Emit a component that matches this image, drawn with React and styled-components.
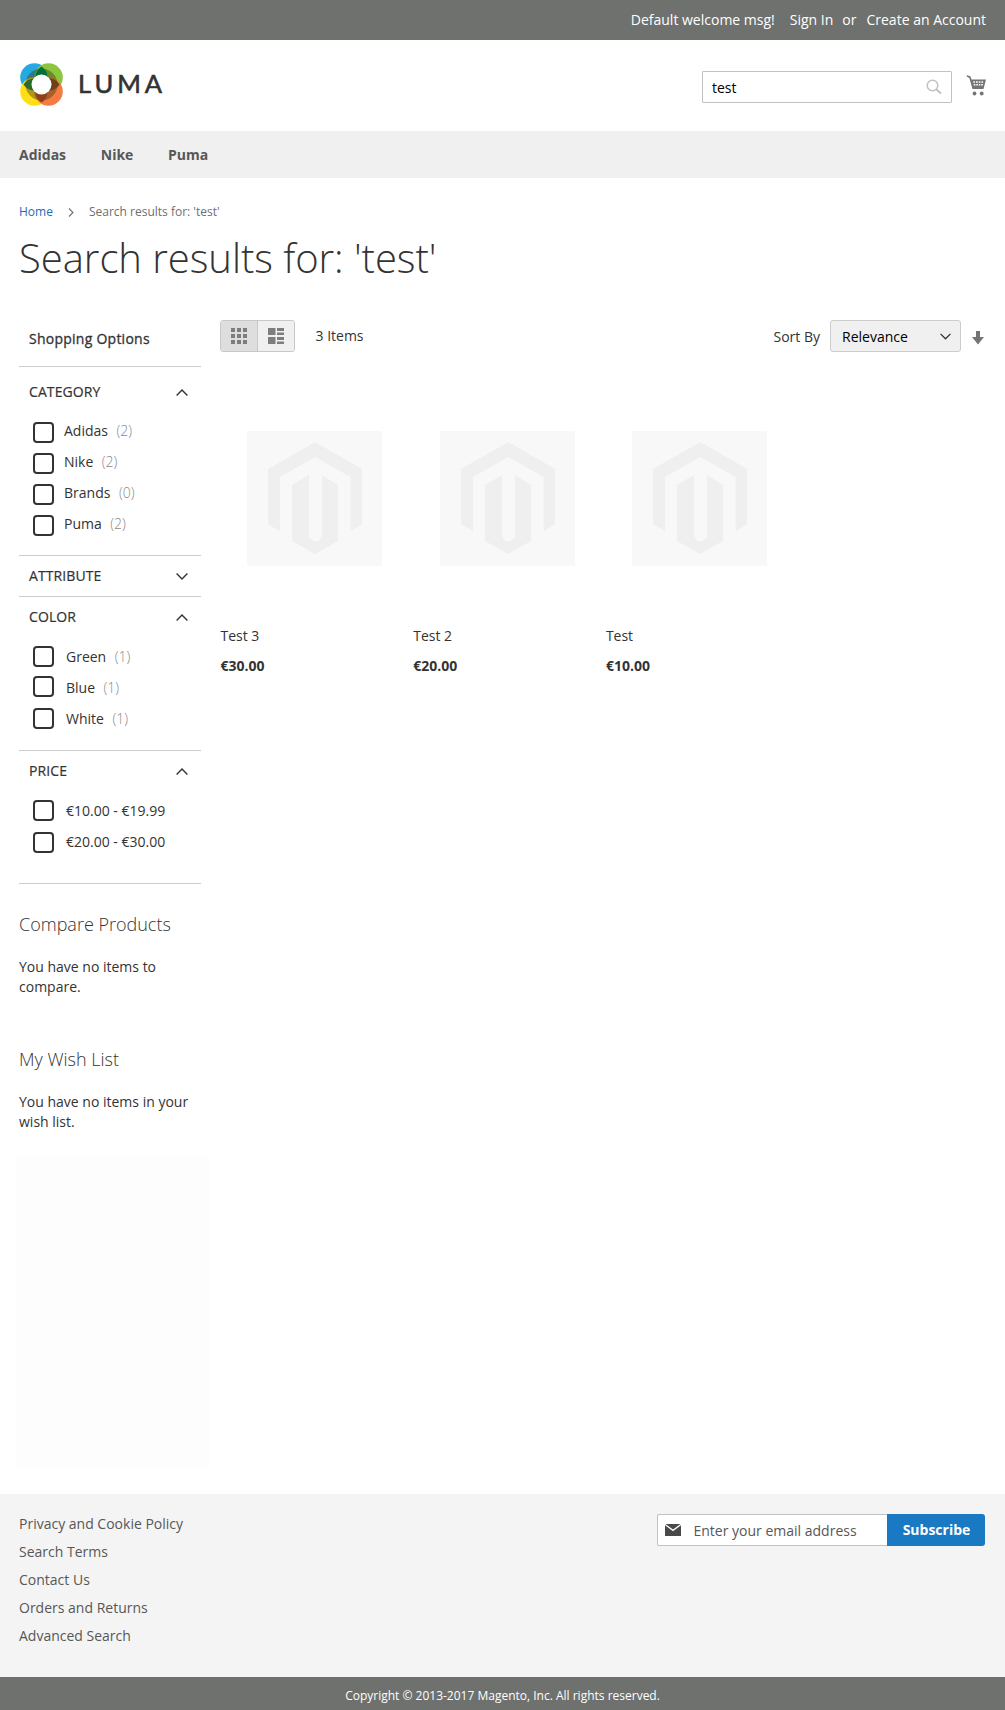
import React from "react";
import styled, { createGlobalStyle } from "styled-components";

const Global = createGlobalStyle`
  * { box-sizing: border-box; }
  body { margin: 0; background: #fff; color: #333; font: 14px/20px "Open Sans", sans-serif; }
  ul { list-style: none; margin: 0; padding: 0; }
  a { color: inherit; text-decoration: none; }
  svg { display: block; flex: none; }
  input, button, select { font: inherit; }
`;

const TopBar = styled.div`
  height: 40px; background: #6e716e; color: #fff;
  display: flex; justify-content: flex-end; padding: 10px 19px 0 0;
`;
const TopItem = styled.span`margin-left: ${(p) => p.$gap}px; white-space: nowrap;`;

const Header = styled.header`
  height: 91px; display: flex; justify-content: space-between; padding: 22px 19px 0 19px;
`;
const Brand = styled.a`display: flex; align-items: flex-start; gap: 14px;`;
const BrandName = styled.span`
  font: 400 25.5px/30px Lato, sans-serif; letter-spacing: 4px; color: #333; padding-top: 6px;
  -webkit-text-stroke: 0.6px #333;
`;
const Tools = styled.div`display: flex; gap: 14px;`;
const SearchBox = styled.div`
  width: 250px; height: 32px; margin-top: 9px; border: 1px solid #c2c2c2; border-radius: 1px;
  display: flex; align-items: center; padding: 0 9px;
`;
const Field = styled.input`
  flex: 1; min-width: 0; border: 0; outline: 0; padding: 0; background: none; height: 20px;
  margin-top: 2px; color: #000;
  &::placeholder { color: #575757; opacity: 1; }
`;
const CartLink = styled.a`padding-top: 13px;`;

const Nav = styled.nav`
  height: 47px; background: #f0f0f0; display: flex; gap: 34.7px; padding: 14px 19px;
  font-weight: 700; color: #575757;
`;

const Crumbs = styled.div`
  display: flex; align-items: center; height: 20px; margin: 24px 19px 0; font-size: 12px; color: #6f6f6f;
`;
const CrumbLink = styled.a`color: #1f6cb5;`;
const CrumbArrow = styled.svg`margin: 0 15px 0 15px;`;
const Title = styled.h1`
  margin: 8px 19px 0; height: 56px; font-size: 40px; line-height: 56px; font-weight: 300; color: #333;
  letter-spacing: -0.04px;
`;

const Columns = styled.div`display: flex; height: 1208px; padding: 33px 19px 0;`;
const Sidebar = styled.aside`width: 182px; flex: none;`;
const Content = styled.main`flex: 1; min-width: 0; margin: 1px 0 0 19px;`;

const OptionsTitle = styled.div`
  height: 47px; padding: 10px 10px 0; letter-spacing: 0.25px; -webkit-text-stroke: 0.3px #333;
`;
const Filter = styled.section`
  border-top: 1px solid #ccc; height: ${(p) => p.$h}px; padding: ${(p) => p.$top}px 10px 0;
`;
const FilterHead = styled.div`
  display: flex; justify-content: space-between; align-items: center; height: 20px;
  text-transform: uppercase; padding-right: 3px; letter-spacing: 0.1px; -webkit-text-stroke: 0.2px #333;
`;
const FilterList = styled.ul`padding: ${(p) => p.$top}px 0 0 4px;`;
const FilterRow = styled.li`
  display: flex; height: 31px; line-height: 31px; white-space: nowrap;
`;
const Check = styled.span`
  width: 21px; height: 21px; border: 2px solid #333; border-radius: 4px; background: #fff;
  margin: ${(p) => p.$top}px ${(p) => p.$gap}px 0 0;
`;
const Count = styled.span`color: #8a8a8a; font-weight: 300; margin-left: 8.5px;`;

const SideBlock = styled.section`height: ${(p) => p.$h}px;`;
const SideTitle = styled.h2`margin: 0; font-size: 18px; line-height: 24px; font-weight: 300;`;
const SideText = styled.p`margin: 21px 0 0;`;
const SidePanel = styled.div`width: 193px; height: 310px; margin-left: -3px; background: #fdfdfd;`;

const Toolbar = styled.div`display: flex; align-items: flex-start; height: 32px;`;
const Modes = styled.div`
  display: flex; width: 75px; height: 32px; border: 1px solid #c8c8c8; border-radius: 3px; overflow: hidden;
`;
const Mode = styled.span`
  flex: 1; display: flex; align-items: center; justify-content: center;
  background: ${(p) => (p.$on ? "#dedede" : "#f0f0f0")};
  & + & { border-left: 1px solid #c8c8c8; }
`;
const Amount = styled.span`margin: 6px auto 0 20.5px;`;
const SortLabel = styled.span`margin: 7px 10px 0 0;`;
const Select = styled.div`
  width: 131px; height: 32px; border: 1px solid #ccc; border-radius: 3px; background: #f0f0f0; color: #000;
  display: flex; align-items: center; justify-content: space-between; padding: 1px 9px 0 11px;
`;
const SortArrow = styled.svg`margin: 11px 2px 0 11px;`;

const Products = styled.ul`display: grid; grid-template-columns: repeat(3, 192.7px); margin: 79px 0 0 0;`;
const Photo = styled.svg`margin-left: 27px;`;
const ProductName = styled.div`margin: 60px 0 0 0.5px; height: 20px;`;
const Price = styled.div`margin: 10px 0 0 0.5px; font-weight: 700;`;

const Footer = styled.footer`
  height: 183px; background: #f4f4f4; display: flex; justify-content: space-between; padding: 16px 20px 0 19px;
`;
const FooterLink = styled.li`line-height: 28px; color: #575757;`;
const Newsletter = styled.form`display: flex; width: 328px; height: 32px; margin-top: 4px;`;
const EmailBox = styled.div`
  flex: 1; background: #fff; border: 1px solid #c2c2c2; border-right: 0; border-radius: 2px 0 0 2px;
  display: flex; align-items: center; gap: 12.5px; padding-left: 7px;
`;
const Subscribe = styled.button`
  width: 98px; border: 0; padding: 0 0 0 1px; background: #1979c3; color: #fff; font-weight: 700; border-radius: 0 3px 3px 0;
`;
const Copyright = styled.div`
  height: 33px; background: #6e716e; color: #fff; font-size: 12px; line-height: 29px; padding-top: 4px; text-align: center;
`;

const Logo = () => (
  <svg width="45" height="45" viewBox="0 0 45 45">
    <circle cx="15.5" cy="15.5" r="14.3" fill="#26a9e0" />
    <circle cx="29.5" cy="15.5" r="14.3" fill="#8cc63f" />
    <circle cx="15.5" cy="29.5" r="14.3" fill="#ffde17" />
    <circle cx="29.5" cy="29.5" r="14.3" fill="#f47b42" />
    <circle cx="22.5" cy="22.5" r="16" fill="#3b3a10" fillOpacity=".42" />
    <path d="M22.5 4.500Q28 8 28.5 15h-12Q17 8 22.5 4.500z" fill="#00703c" />
    <path d="M22.5 40.500Q28 37 28.5 30h-12Q17 37 22.5 40.500z" fill="#8e4116" />
    <path d="M4.500 22.5Q8 17 15 16.5v12Q8 28 4.500 22.5z" fill="#2a6a2e" />
    <path d="M40.500 22.5Q37 17 30 16.5v12Q37 28 40.500 22.5z" fill="#6b4216" />
    <circle cx="22.5" cy="22.5" r="10" fill="#fff" />
  </svg>
);

const Chevron = ({ up, w = 12, h = 7 }) => (
  <svg width={w} height={h} viewBox="0 0 12 7" fill="none" stroke="#333" strokeWidth="1.4">
    <path d={up ? "M.6 6.4 6 1l5.4 5.4" : "M.6.6 6 6 11.4.6"} />
  </svg>
);

const Placeholder = () => (
  <Photo width="135" height="135" viewBox="0 0 135 135">
    <rect width="135" height="135" fill="#f8f8f8" />
    <path fill="#efefef" d="M68.300 11 115 38v55.500L103.500 100V46L68.300 26 33 46v54L21 93.500V38z" />
    <path fill="#efefef" d="M62 44v60a6.500 6.500 0 0 0 13 0V44l16 10v56l-23 13-23-13V54z" />
  </Photo>
);

const filters = [
  { name: "Category", open: true, h: 189, top: 15, list: 13, gap: 10, items: [["Adidas", "(2)", 7], ["Nike", "(2)", 7], ["Brands", "(0)", 7], ["Puma", "(2)", 7]] },
  { name: "Attribute", open: false, h: 41, top: 10, items: [] },
  { name: "Color", open: true, h: 154, top: 10, list: 14, gap: 12, items: [["Green", "(1)", 5], ["Blue", "(1)", 4], ["White", "(1)", 5]] },
  { name: "Price", open: true, h: 133, top: 10, list: 14, gap: 12, items: [["€10.00 - €19.99", "", 5], ["€20.00 - €30.00", "", 6]] },
];

export default function App() {
  return (
    <>
      <Global />
      <TopBar>
        <TopItem $gap={0}>Default welcome msg!</TopItem>
        <TopItem $gap={15}>Sign In</TopItem>
        <TopItem $gap={9}>or</TopItem>
        <TopItem $gap={10}>Create an Account</TopItem>
      </TopBar>
      <Header>
        <Brand href="#"><Logo /><BrandName>LUMA</BrandName></Brand>
        <Tools>
          <SearchBox>
            <Field defaultValue="test" />
            <svg width="16" height="16" viewBox="0 0 16 16" fill="none" stroke="#c2c2c2">
              <circle cx="6.500" cy="6.500" r="5.300" strokeWidth="1.500" />
              <path d="m10.500 10.500 4.500 4" strokeWidth="2" />
            </svg>
          </SearchBox>
          <CartLink href="#">
            <svg width="20" height="21" viewBox="0 0 20 21" fill="#757575">
              <path d="M.3 1.300 1.500.2 4.500 1.600 5.500 4.500H20L17.500 14H6.500L3.300 3z" />
              <g fill="#fff">
                {[7.300, 10, 12.700, 15.400].map((x) => <rect key={x} x={x} y="6.300" width="1.700" height="1.500" />)}
                {[7.800, 10.300, 12.800, 15.200].map((x) => <rect key={x} x={x} y="9" width="1.600" height="1.500" />)}
              </g>
              <circle cx="8.500" cy="18.500" r="1.900" /><circle cx="15.700" cy="18.500" r="1.900" />
            </svg>
          </CartLink>
        </Tools>
      </Header>
      <Nav><a>Adidas</a><a>Nike</a><a>Puma</a></Nav>
      <Crumbs>
        <CrumbLink href="#">Home</CrumbLink>
        <CrumbArrow width="6" height="9" viewBox="0 0 6 9" fill="none" stroke="#757575" strokeWidth="1.200"><path d="m1 .5 4 4-4 4" /></CrumbArrow>
        <span>Search results for: 'test'</span>
      </Crumbs>
      <Title>Search results for: 'test'</Title>
      <Columns>
        <Sidebar>
          <OptionsTitle>Shopping Options</OptionsTitle>
          {filters.map((f) => (
            <Filter key={f.name} $h={f.h} $top={f.top}>
              <FilterHead>{f.name}<Chevron up={f.open} /></FilterHead>
              {f.open && (
                <FilterList $top={f.list}>
                  {f.items.map(([label, count, top]) => (
                    <FilterRow key={label}>
                      <Check $top={top} $gap={f.gap} />{label}{count && <Count>{count}</Count>}
                    </FilterRow>
                  ))}
                </FilterList>
              )}
            </Filter>
          ))}
          <Filter as="div" $h={29} $top={0} />
          <SideBlock $h={135}><SideTitle>Compare Products</SideTitle><SideText>You have no items to compare.</SideText></SideBlock>
          <SideBlock $h={110}><SideTitle>My Wish List</SideTitle><SideText>You have no items in your wish list.</SideText></SideBlock>
          <SidePanel />
        </Sidebar>
        <Content>
          <Toolbar>
            <Modes>
              <Mode $on>
                <svg width="16" height="16" viewBox="0 0 16 16" fill="#7d7d7d">
                  {[0, 6, 12].map((y) => [0, 6, 12].map((x) => <rect key={x + "-" + y} x={x} y={y} width="4" height="4" />))}
                </svg>
              </Mode>
              <Mode>
                <svg width="16" height="16" viewBox="0 0 16 16" fill="#7d7d7d">
                  <path d="M0 0h7.500v7H0zM0 9h7.500v7H0zM9 0h7v3H9zM9 4.500h7v2.500H9zM9 9h7v3H9zM9 13.500h7V16H9z" />
                </svg>
              </Mode>
            </Modes>
            <Amount>3 Items</Amount>
            <SortLabel>Sort By</SortLabel>
            <Select>Relevance<Chevron w={11} /></Select>
            <SortArrow width="12" height="14" viewBox="0 0 12 14" fill="#757575"><path d="M4 0h4v6h4l-6 7.500L0 6h4z" /></SortArrow>
          </Toolbar>
          <Products>
            {[["Test 3", "€30.00"], ["Test 2", "€20.00"], ["Test", "€10.00"]].map(([n, p]) => (
              <li key={n}><Placeholder /><ProductName>{n}</ProductName><Price>{p}</Price></li>
            ))}
          </Products>
        </Content>
      </Columns>
      <Footer>
        <ul>
          {["Privacy and Cookie Policy", "Search Terms", "Contact Us", "Orders and Returns", "Advanced Search"].map((t) => <FooterLink key={t}>{t}</FooterLink>)}
        </ul>
        <Newsletter>
          <EmailBox>
            <svg width="16" height="12" viewBox="0 0 16 12" fill="#494949"><path d="M.5 0h15L8 5.500zM0 1.200l8 6 8-6V12H0z" /></svg>
            <Field placeholder="Enter your email address" />
          </EmailBox>
          <Subscribe type="button">Subscribe</Subscribe>
        </Newsletter>
      </Footer>
      <Copyright>Copyright © 2013-2017 Magento, Inc. All rights reserved.</Copyright>
    </>
  );
}
